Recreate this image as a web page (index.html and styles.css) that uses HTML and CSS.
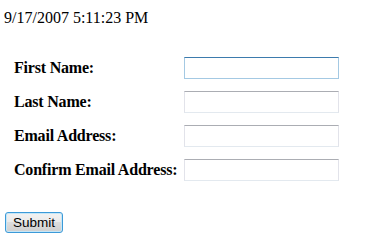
FILE: index.html
```html
<!DOCTYPE html>
<html>
<head>
<meta charset="utf-8">
<link rel="stylesheet" href="styles.css">
</head>
<body>
<div class="date">9/17/2007 5:11:23 PM</div>
<form class="form">
  <div class="fields">
    <label class="label" for="fn">First Name:</label>
    <input class="box box-focus" id="fn" type="text">
    <label class="label" for="ln">Last Name:</label>
    <input class="box" id="ln" type="text">
    <label class="label" for="em">Email Address:</label>
    <input class="box" id="em" type="text">
    <label class="label" for="ce">Confirm Email Address:</label>
    <input class="box" id="ce" type="text">
  </div>
  <button class="submit" type="button">Submit</button>
</form>
</body>
</html>
```
FILE: styles.css
```css
html, body {
  background: #ffffff;
}
body {
  margin: 0;
  padding: 9px 0 0 4px;
  font-family: "Liberation Serif", "Times New Roman", serif;
  font-size: 16px;
  color: #000;
}
.date {
  line-height: 18px;
}
.form {
  margin: 30px 0 0 0;
}
.fields {
  display: grid;
  grid-template-columns: 170px 155px;
  grid-auto-rows: 22px;
  row-gap: 12px;
  align-items: center;
  padding-left: 10px;
}
.label {
  font-weight: bold;
  line-height: 18px;
  letter-spacing: -0.2px;
  white-space: nowrap;
}
.box {
  box-sizing: border-box;
  width: 155px;
  height: 22px;
  margin: 0;
  padding: 0 2px;
  border: 1px solid #e2e3ea;
  border-top-color: #abadb3;
  border-bottom-color: #e3e9ef;
  background: #fff;
  outline: none;
  font-family: "Liberation Sans", Arial, sans-serif;
  font-size: 13px;
}
.box-focus {
  border-color: #a4c9e3;
  border-top-color: #3d7bad;
}
.submit {
  display: block;
  box-sizing: border-box;
  margin: 31px 0 0 1px;
  width: 58px;
  height: 21px;
  padding: 0;
  border: 1px solid #3c9ad8;
  border-radius: 3px;
  background: linear-gradient(#f2f2f2 0%, #ebebeb 45%, #dddddd 50%, #cfcfcf 100%);
  box-shadow: inset 0 0 0 1px #c5e6f7;
  font-family: "Liberation Sans", Arial, sans-serif;
  font-size: 13.5px;
  color: #000;
  line-height: 17px;
}
```
